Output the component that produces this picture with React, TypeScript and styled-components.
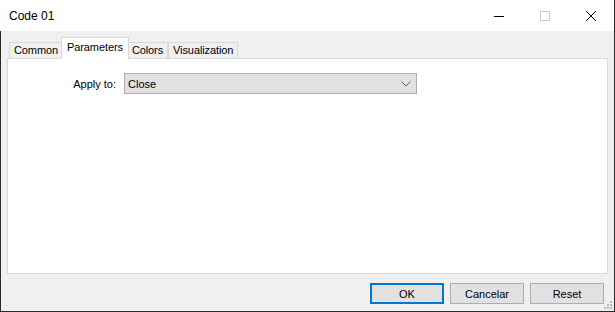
import * as React from 'react';
import styled, { createGlobalStyle } from 'styled-components';

const GlobalStyle = createGlobalStyle`
    html, body {
        margin: 0;
        padding: 0;
        background: #ffffff;
    }
    body {
        font-family: "Liberation Sans", Arial, sans-serif;
        font-size: 11px;
        color: #000;
    }
`;

const tabs = ['Common', 'Parameters', 'Colors', 'Visualization'];
const buttons = ['OK', 'Cancelar', 'Reset'];

export default function App() {
    const [active, setActive] = React.useState(1);

    return (
        <>
            <GlobalStyle />
            <Window>
                <TitleBar>
                    <Caption>Code 01</Caption>
                    <CaptionButton aria-label="Minimize">
                        <svg width="10" height="10" viewBox="0 0 10 10">
                            <line x1="0" y1="5.5" x2="10" y2="5.5" stroke="#000" strokeWidth="1" />
                        </svg>
                    </CaptionButton>
                    <CaptionButton aria-label="Maximize">
                        <svg width="10" height="10" viewBox="0 0 10 10">
                            <rect x="0.5" y="0.5" width="9" height="9" fill="none" stroke="#c8c8c8" strokeWidth="1" />
                        </svg>
                    </CaptionButton>
                    <CaptionButton aria-label="Close">
                        <svg width="10" height="10" viewBox="0 0 10 10">
                            <path d="M0 0 L10 10 M10 0 L0 10" stroke="#000" strokeWidth="1" />
                        </svg>
                    </CaptionButton>
                </TitleBar>

                <Body>
                    <TabStrip>
                        {tabs.map((t, i) => (
                            <Tab key={t} selected={i === active} onClick={() => setActive(i)}>
                                {t}
                            </Tab>
                        ))}
                    </TabStrip>
                    <Panel>
                        <FormRow>
                            <FieldLabel>Apply to:</FieldLabel>
                            <Select>
                                <span>Close</span>
                                <svg width="10" height="6" viewBox="0 0 10 6">
                                    <polyline points="0.5,0.5 5,5 9.5,0.5" fill="none" stroke="#606060" strokeWidth="1" />
                                </svg>
                            </Select>
                        </FormRow>
                    </Panel>
                    <Footer>
                        {buttons.map((b, i) => (
                            <Button key={b} primary={i === 0}>{b}</Button>
                        ))}
                    </Footer>
                </Body>

                <Grip>
                    <svg width="8" height="8" viewBox="0 0 8 8">
                        <rect x="6" y="0" width="2" height="2" fill="#b8b8b8" />
                        <rect x="3" y="3" width="2" height="2" fill="#b8b8b8" />
                        <rect x="6" y="3" width="2" height="2" fill="#b8b8b8" />
                        <rect x="0" y="6" width="2" height="2" fill="#b8b8b8" />
                        <rect x="3" y="6" width="2" height="2" fill="#b8b8b8" />
                        <rect x="6" y="6" width="2" height="2" fill="#b8b8b8" />
                    </svg>
                </Grip>
            </Window>
        </>
    );
}

const Window = styled.div`
    position: relative;
    width: 615px;
    height: 312px;
    box-sizing: border-box;
    display: flex;
    flex-direction: column;
    border-right: 1px solid #2b2b2b;
    border-bottom: 1px solid #2b2b2b;
    overflow: hidden;
`;

const TitleBar = styled.div`
    height: 31px;
    flex: none;
    display: flex;
    align-items: center;
    background: #ffffff;
`;

const Caption = styled.div`
    flex: 1;
    padding-left: 9px;
    font-size: 12px;
    padding-top: 1px;
`;

const CaptionButton = styled.div`
    width: 46px;
    height: 31px;
    display: flex;
    align-items: center;
    justify-content: center;
`;

const Body = styled.div`
    flex: 1;
    display: flex;
    flex-direction: column;
    background: #f0f0f0;
    border-left: 1px solid #2b2b2b;
    padding: 7px 6px 0 6px;
`;

const TabStrip = styled.div`
    display: flex;
    align-items: flex-end;
    height: 21px;
    padding-left: 2px;
    position: relative;
    z-index: 1;
    margin-bottom: -1px;
`;

const Tab = styled.div<{ selected?: boolean }>`
    box-sizing: border-box;
    height: ${p => (p.selected ? '22px' : '17px')};
    margin: 0 ${p => (p.selected ? '-2px' : '0')};
    padding: ${p => (p.selected ? '3px 5px 0' : '1px 4px 0')};
    background: ${p => (p.selected ? '#ffffff' : '#f0f0f0')};
    border: 1px solid #d9d9d9;
    border-bottom: ${p => (p.selected ? 'none' : '1px solid #d9d9d9')};
    position: relative;
    z-index: ${p => (p.selected ? 2 : 1)};
    white-space: nowrap;
    letter-spacing: -0.1px;
    cursor: default;
    &:first-child {
        margin-left: ${p => (p.selected ? '-2px' : '0')};
    }
`;

const Panel = styled.div`
    height: 216px;
    box-sizing: border-box;
    background: #ffffff;
    border: 1px solid #d9d9d9;
    padding-top: 14px;
`;

const FormRow = styled.div`
    display: flex;
    align-items: center;
    gap: 8px;
`;

const FieldLabel = styled.div`
    width: 108px;
    text-align: right;
`;

const Select = styled.div`
    width: 293px;
    height: 21px;
    box-sizing: border-box;
    display: flex;
    align-items: center;
    justify-content: space-between;
    padding: 0 5px 0 3px;
    background: #e1e1e1;
    border: 1px solid #adadad;
`;

const Footer = styled.div`
    display: flex;
    justify-content: flex-end;
    gap: 6px;
    padding: 9px 4px 0 0;
`;

const Button = styled.div<{ primary?: boolean }>`
    width: 74px;
    height: 21px;
    box-sizing: border-box;
    display: flex;
    align-items: center;
    justify-content: center;
    background: #e1e1e1;
    border: ${p => (p.primary ? '2px solid #0078d7' : '1px solid #adadad')};
`;

const Grip = styled.div`
    position: absolute;
    right: 2px;
    bottom: 2px;
    width: 8px;
    height: 8px;
    display: flex;
`;
